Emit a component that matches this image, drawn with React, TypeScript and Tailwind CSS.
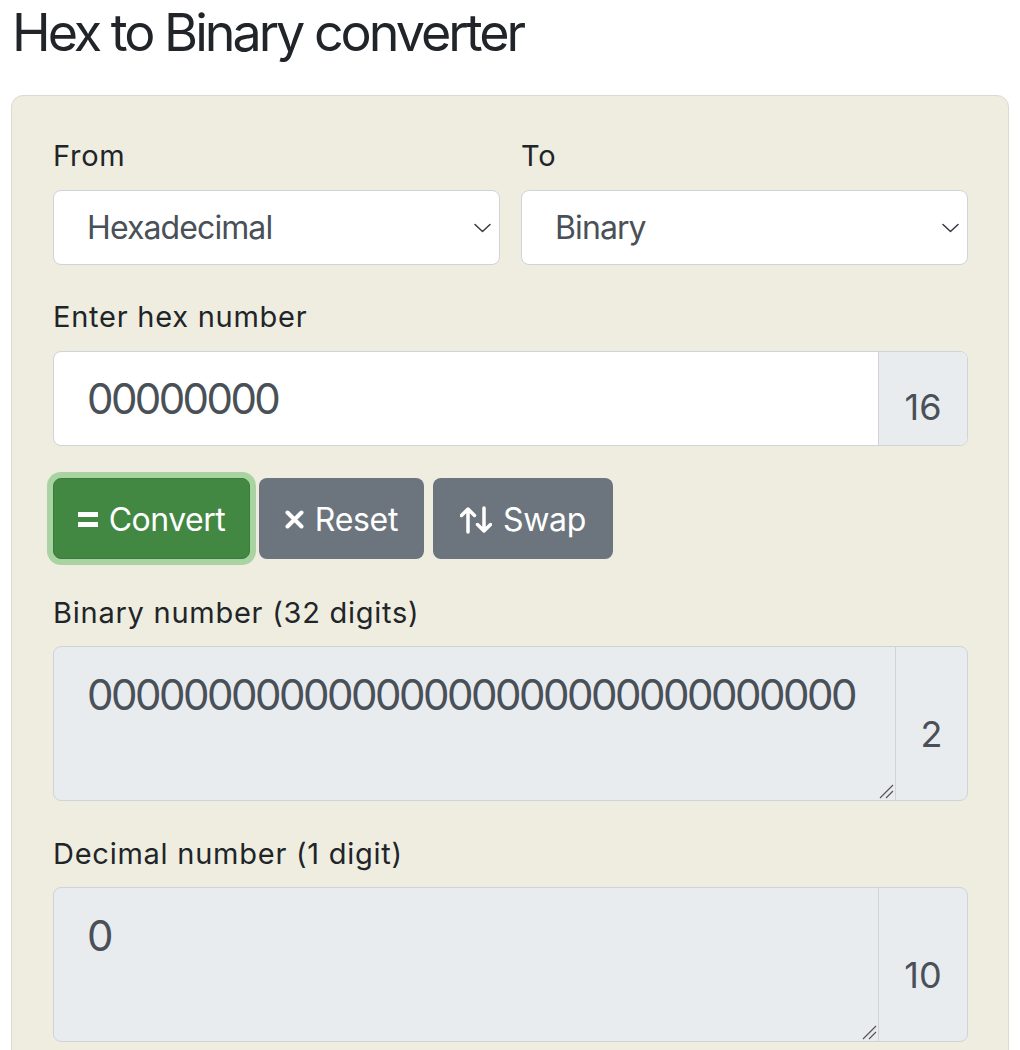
import React from "react";

function Chevron() {
  return (
    <svg width="17" height="10" viewBox="0 0 17 10" className="absolute right-[8px] top-1/2 -translate-y-1/2">
      <path d="M1 1.5 L8.5 8.5 L16 1.5" fill="none" stroke="#343a40" strokeWidth="1.5" strokeLinecap="round" strokeLinejoin="round" />
    </svg>
  );
}

function Select({ value }: { value: string }) {
  return (
    <div className="relative mt-[13px] flex h-[75px] items-center rounded-[8px] border border-[#ced4da] bg-white pl-[33px] text-[32px] tracking-[-0.9px] text-[#495057]">
      {value}
      <Chevron />
    </div>
  );
}

function Label({ children, className = "" }: { children: React.ReactNode; className?: string }) {
  return <div className={"h-[42px] text-[29px] leading-[42px] tracking-[0.75px] text-[#212529] " + className}>{children}</div>;
}

function Resizer() {
  return (
    <svg width="16" height="16" viewBox="0 0 16 16" className="absolute bottom-[1px] right-[1px]">
      <path d="M15 2 L2 15 M15 8 L8 15" stroke="#555" strokeWidth="1.2" />
    </svg>
  );
}

function OutputBox({ value, base, addonW }: { value: string; base: string; addonW: string }) {
  return (
    <div className="mt-[12px] flex h-[155px] overflow-hidden rounded-[8px] border border-[#ced4da] bg-[#e9ecef]">
      <div className="relative flex-1 pl-[33px] pt-[16px] text-[42px] leading-[63px] tracking-[-2.5px] text-[#495057]">
        {value}
        <Resizer />
      </div>
      <div className={addonW + " flex items-center justify-center border-l border-[#ced4da] pt-[20px] text-[36px] text-[#495057]"}>
        {base}
      </div>
    </div>
  );
}

export default function App() {
  return (
    <div className="min-h-[1050px] bg-white font-['Inter',sans-serif]">
      <h1 className="pl-[12px] pt-[2px] text-[52px] font-normal leading-[62px] tracking-[-3px] text-[#212529]">Hex to Binary converter</h1>
      <div className="ml-[11px] mt-[31px] w-[998px] rounded-[12px] border border-[#dcdad0] bg-[#efede0] pb-[40px] pl-[41px] pr-[40px] pt-[39px]">
        <div className="grid grid-cols-2 gap-x-[21px]">
          <div>
            <Label>From</Label>
            <Select value="Hexadecimal" />
          </div>
          <div>
            <Label>To</Label>
            <Select value="Binary" />
          </div>
        </div>

        <Label className="mt-[31px]">Enter hex number</Label>
        <div className="mt-[13px] flex h-[95px] overflow-hidden rounded-[8px] border border-[#ced4da] bg-white">
          <div className="flex flex-1 items-center pl-[33px] text-[42px] tracking-[-2.6px] text-[#495057]">00000000</div>
          <div className="flex w-[89px] items-center justify-center border-l border-[#ced4da] bg-[#e9ecef] pt-[16px] text-[36px] text-[#495057]">16</div>
        </div>

        <div className="mt-[32px] flex gap-[9px]">
          <div className="flex h-[81px] w-[197px] items-center justify-center gap-[11px] rounded-[8px] border border-[#3a7a3b] bg-[#428843] pt-[2px] text-[32px] tracking-[-0.5px] text-white shadow-[0_0_0_6px_#a9d3a0]">
            <svg width="20" height="15" viewBox="0 0 20 15">
              <rect x="0" y="0" width="20" height="5" fill="white" />
              <rect x="0" y="10" width="20" height="5" fill="white" />
            </svg>
            <span>Convert</span>
          </div>
          <div className="flex h-[81px] w-[165px] items-center justify-center gap-[11px] rounded-[8px] bg-[#6c757d] pt-[2px] text-[32px] tracking-[-0.3px] text-white">
            <svg width="19" height="19" viewBox="0 0 19 19">
              <path d="M2.5 2.5 L16.5 16.5 M16.5 2.5 L2.5 16.5" stroke="white" strokeWidth="4" strokeLinecap="round" />
            </svg>
            <span>Reset</span>
          </div>
          <div className="flex h-[81px] w-[180px] items-center justify-center gap-[11px] rounded-[8px] bg-[#6c757d] pt-[2px] text-[32px] tracking-[-0.3px] text-white">
            <svg width="32" height="28" viewBox="0 0 32 28">
              <path d="M8 26 L8 3 M1.5 9.5 L8 3 L14.5 9.5" fill="none" stroke="white" strokeWidth="3.5" strokeLinecap="round" strokeLinejoin="round" />
              <path d="M24 2 L24 25 M17.5 18.5 L24 25 L30.5 18.5" fill="none" stroke="white" strokeWidth="3.5" strokeLinecap="round" strokeLinejoin="round" />
            </svg>
            <span>Swap</span>
          </div>
        </div>

        <Label className="mt-[33px]">Binary number (32 digits)</Label>
        <OutputBox value="00000000000000000000000000000000" base="2" addonW="w-[72px]" />

        <Label className="mt-[32px]">Decimal number (1 digit)</Label>
        <OutputBox value="0" base="10" addonW="w-[89px]" />
      </div>
    </div>
  );
}
